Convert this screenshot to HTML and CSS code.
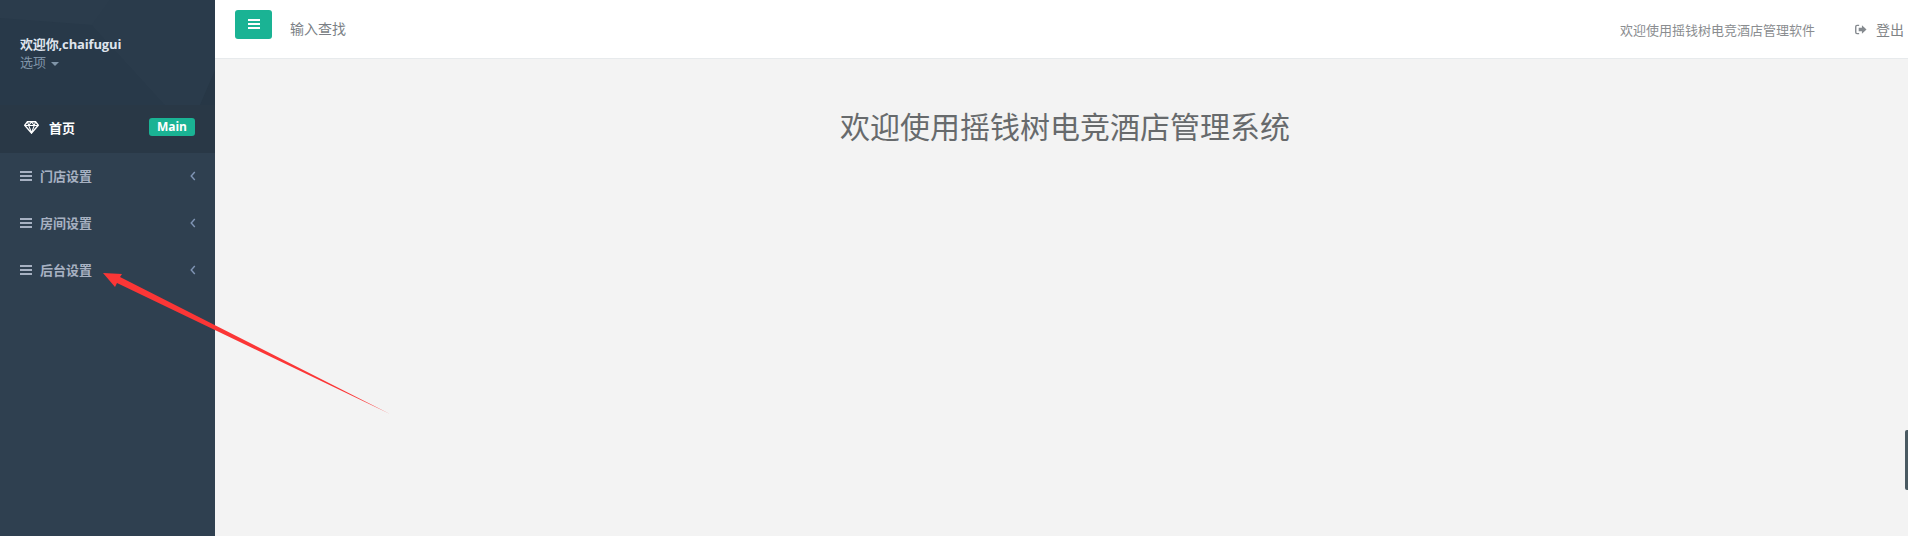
FILE: index.html
```html
<!DOCTYPE html>
<html lang="zh">
<head>
<meta charset="utf-8">
<title>摇钱树电竞酒店管理系统</title>
<link rel="stylesheet" href="styles.css">
</head>
<body>
<div class="app">
  <aside class="sidebar">
    <div class="profile">
      <svg class="profile-bg" viewBox="0 0 215 105" preserveAspectRatio="none" aria-hidden="true">
        <polygon points="0,18 92,25 165,105 0,105" fill="#283949"/>
        <polygon points="92,25 110,0 215,0 215,105 165,105" fill="#2a3b4b"/>
        <polygon points="200,105 215,70 215,105" fill="#273746"/>
      </svg>
      <div class="profile-text">
        <strong class="user">欢迎你,chaifugui</strong>
        <span class="options">选项 <i class="caret"></i></span>
      </div>
    </div>
    <nav>
      <a class="item active">
        <svg class="gem" viewBox="0 0 16 14" aria-hidden="true"><path d="M3.6 .8h8.8L15.4 4.6 8 13 .6 4.600z" fill="none" stroke="#fff" stroke-width="1.500"/><path d="M.8 4.800h14.400M5 4.800 8 12.600 11 4.800M3.600 1 5 4.800 8 1 11 4.800 12.400 1" fill="none" stroke="#fff" stroke-width="1.100"/></svg>
        <span class="label">首页</span>
        <span class="badge">Main</span>
      </a>
      <a class="item">
        <span class="bars"></span><span class="label">门店设置</span>
        <svg class="chev" viewBox="0 0 6 10" aria-hidden="true"><path d="M4.800 1 1.200 5l3.600 4" fill="none" stroke="currentColor" stroke-width="1.400"/></svg>
      </a>
      <a class="item">
        <span class="bars"></span><span class="label">房间设置</span>
        <svg class="chev" viewBox="0 0 6 10" aria-hidden="true"><path d="M4.800 1 1.200 5l3.600 4" fill="none" stroke="currentColor" stroke-width="1.400"/></svg>
      </a>
      <a class="item">
        <span class="bars"></span><span class="label">后台设置</span>
        <svg class="chev" viewBox="0 0 6 10" aria-hidden="true"><path d="M4.800 1 1.200 5l3.600 4" fill="none" stroke="currentColor" stroke-width="1.400"/></svg>
      </a>
    </nav>
  </aside>
  <main class="main">
    <header class="topbar">
      <button class="toggle" type="button"><span class="bars white"></span></button>
      <span class="search">输入查找</span>
      <span class="welcome">欢迎使用摇钱树电竞酒店管理软件</span>
      <a class="logout">
        <svg class="out" viewBox="0 0 13 11" aria-hidden="true"><path d="M4.500 1H2.200C1.300 1 .8 1.500 .8 2.400v6.200C.8 9.500 1.300 10 2.200 10h2.300" fill="none" stroke="#858a8f" stroke-width="1.500"/><path d="M4 3.500h3.500V1L12.500 5.500 7.500 10V7.500H4z" fill="#858a8f"/></svg>
        <span>登出</span>
      </a>
    </header>
    <section class="content">
      <h1>欢迎使用摇钱树电竞酒店管理系统</h1>
    </section>
  </main>
</div>
<svg class="arrow" viewBox="0 0 1908 536" aria-hidden="true">
  <polygon points="103,273 122,274 120,277 390,414 117,283 115,287" fill="#fb3636"/>
</svg>
<div class="edge-tab"></div>
</body>
</html>
```
FILE: styles.css
```css
* { box-sizing: border-box; }
html, body { margin: 0; height: 100%; overflow: hidden; }
body {
  font-family: "Open Sans", "Noto Sans CJK SC", sans-serif;
  font-size: 13px;
  color: #676a6c;
  background: #f3f3f4;
  position: relative;
}
.app { display: flex; height: 536px; }

.sidebar { width: 215px; flex: none; background: #2f4050; color: #a7b1c2; }
.profile {
  position: relative;
  height: 105px;
  padding: 34px 20px 0;
  background: #2b3c4c;
  overflow: hidden;
}
.profile-bg { position: absolute; inset: 0; width: 100%; height: 100%; }
.profile-text { position: relative; display: flex; flex-direction: column; }
.user { color: #dfe4ed; font-size: 13px; font-weight: 700; line-height: 20px; letter-spacing: -.15px; }
.options { color: #8095a8; font-size: 13px; line-height: 17px; }
.caret {
  display: inline-block;
  width: 0; height: 0;
  margin-left: 2px;
  vertical-align: middle;
  border-top: 4px solid #8095a8;
  border-left: 4px solid transparent;
  border-right: 4px solid transparent;
}

.item {
  display: flex;
  align-items: center;
  height: 47px;
  padding: 0 20px 2px;
  font-size: 13px;
  font-weight: 700;
}
.item.active { height: 48px; background: #293846; color: #fff; padding: 0 20px 4px 24px; }
.gem { width: 15px; height: 13px; margin-right: 10px; }
.label { flex: 1; }
.badge {
  background: #1ab394;
  color: #fff;
  border-radius: 3px;
  font-size: 12px;
  font-weight: 700;
  line-height: 18px;
  padding: 0 8px;
  flex: none;
}
.bars {
  display: inline-block;
  width: 12px;
  height: 10px;
  margin-right: 8px;
  background: linear-gradient(currentColor 2px, transparent 2px, transparent 4px, currentColor 4px, currentColor 6px, transparent 6px, transparent 8px, currentColor 8px);
}
.bars.white { color: #fff; margin: 0; display: block; }
.chev { width: 6px; height: 10px; color: #8095b5; margin-right: -1px; }

.main { flex: 1; min-width: 0; display: flex; flex-direction: column; }
.topbar {
  height: 59px;
  flex: none;
  display: flex;
  align-items: center;
  background: #fff;
  border-bottom: 1px solid #e7eaec;
  padding-left: 20px;
}
.toggle {
  width: 37px;
  height: 29px;
  margin-top: -10px;
  border: 0;
  padding: 0;
  border-radius: 3px;
  background: #1ab394;
  display: flex;
  align-items: center;
  justify-content: center;
}
.search { margin: 0 0 2px 18px; font-size: 14px; color: #7b7f86; flex: 1; }
.welcome { font-size: 13px; color: #8a8d90; margin-right: 40px; }
.logout { display: flex; align-items: center; gap: 9px; font-size: 14px; color: #7f8386; width: 53px; flex: none; }
.logout span { white-space: nowrap; }
.out { width: 12px; height: 11px; flex: none; }

.content { flex: 1; background: #f3f3f3; padding-top: 48px; }
h1 {
  margin: 0;
  text-align: center;
  font-size: 30px;
  font-weight: 400;
  line-height: 40px;
  color: #676a6c;
  padding-left: 7px;
}

.arrow { position: absolute; inset: 0; width: 1908px; height: 536px; pointer-events: none; }
.edge-tab {
  position: absolute;
  left: 1905px;
  top: 430px;
  width: 3px;
  height: 60px;
  background: #4a5a62;
  border-radius: 2px 0 0 2px;
}
```
